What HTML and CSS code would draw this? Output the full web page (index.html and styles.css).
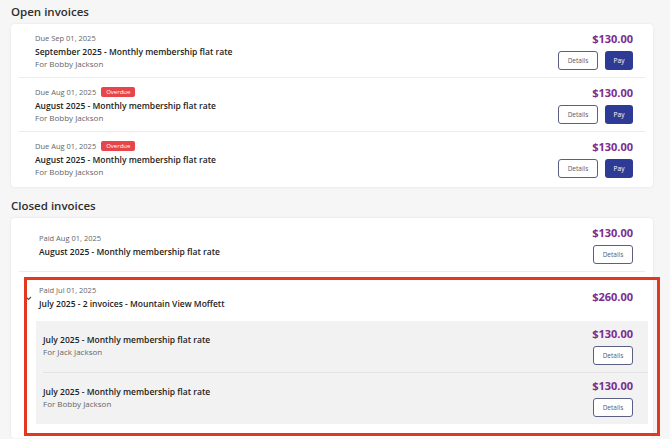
FILE: index.html
```html
<!DOCTYPE html>
<html lang="en">
<head>
  <meta charset="UTF-8" />
  <meta name="viewport" content="width=device-width, initial-scale=1.0"/>
  <title>Invoices</title>
  <link rel="stylesheet" href="styles.css">
</head>
<body>

<h2 class="section-title">Open invoices</h2>
<div class="card card-open">
  <div class="row">
    <div class="info">
      <div class="meta">Due Sep 01, 2025</div>
      <div class="name">September 2025 - Monthly membership flat rate</div>
      <div class="who">For Bobby Jackson</div>
    </div>
    <div class="side">
      <div class="amount">$130.00</div>
      <div class="actions">
        <button class="btn btn-outline">Details</button>
        <button class="btn btn-pay">Pay</button>
      </div>
    </div>
  </div>
  <div class="row">
    <div class="info">
      <div class="meta">Due Aug 01, 2025 <span class="badge">Overdue</span></div>
      <div class="name">August 2025 - Monthly membership flat rate</div>
      <div class="who">For Bobby Jackson</div>
    </div>
    <div class="side">
      <div class="amount">$130.00</div>
      <div class="actions">
        <button class="btn btn-outline">Details</button>
        <button class="btn btn-pay">Pay</button>
      </div>
    </div>
  </div>
  <div class="row">
    <div class="info">
      <div class="meta">Due Aug 01, 2025 <span class="badge">Overdue</span></div>
      <div class="name">August 2025 - Monthly membership flat rate</div>
      <div class="who">For Bobby Jackson</div>
    </div>
    <div class="side">
      <div class="amount">$130.00</div>
      <div class="actions">
        <button class="btn btn-outline">Details</button>
        <button class="btn btn-pay">Pay</button>
      </div>
    </div>
  </div>
</div>

<h2 class="section-title closed">Closed invoices</h2>
<div class="card">
  <div class="row row-closed">
    <div class="info">
      <div class="meta">Paid Aug 01, 2025</div>
      <div class="name">August 2025 - Monthly membership flat rate</div>
    </div>
    <div class="side">
      <div class="amount">$130.00</div>
      <div class="actions">
        <button class="btn btn-outline">Details</button>
      </div>
    </div>
  </div>

  <div class="group">
    <div class="group-head">
      <svg class="chevron" width="7" height="5" viewBox="0 0 7 5"><path d="M1 1l2.5 2.5L6 1" fill="none" stroke="#555" stroke-width="1.2"/></svg>
      <div class="info">
        <div class="meta">Paid Jul 01, 2025</div>
        <div class="name">July 2025 - 2 invoices - Mountain View Moffett</div>
      </div>
      <div class="amount">$260.00</div>
    </div>
    <div class="sub-list">
      <div class="sub-row">
        <div class="info">
          <div class="name">July 2025 - Monthly membership flat rate</div>
          <div class="who">For Jack Jackson</div>
        </div>
        <div class="side">
          <div class="amount">$130.00</div>
          <div class="actions">
            <button class="btn btn-outline">Details</button>
          </div>
        </div>
      </div>
      <div class="sub-row">
        <div class="info">
          <div class="name">July 2025 - Monthly membership flat rate</div>
          <div class="who">For Bobby Jackson</div>
        </div>
        <div class="side">
          <div class="amount">$130.00</div>
          <div class="actions">
            <button class="btn btn-outline">Details</button>
          </div>
        </div>
      </div>
    </div>
    <div class="highlight"></div>
  </div>
</div>

</body>
</html>
```

FILE: styles.css
```css
body {
  margin: 0;
  padding: 5px 17px 0 11px;
  background: #f6f6f7;
  font-family: "Open Sans", Arial, sans-serif;
  color: #2b2b2b;
  overflow: hidden;
}
.section-title {
  margin: 0 0 5px;
  font-size: 11.5px;
  line-height: 14px;
  font-weight: 600;
  color: #2e2e2e;
}
.section-title.closed {
  margin-top: 12px;
}
.card {
  background: #fff;
  border-radius: 4px;
  box-shadow: 0 0 3px rgba(0,0,0,0.08);
}
.card-open {
  padding-bottom: 2px;
}
.row {
  display: flex;
  align-items: center;
  justify-content: space-between;
  margin: 0 8px;
  padding: 7px 12px 7px 16px;
  border-bottom: 1px solid #ececee;
}
.card > .row:last-child {
  border-bottom: none;
}
.row-closed {
  padding-left: 20px;
}
.info {
  display: flex;
  flex-direction: column;
}
.meta {
  font-size: 7.5px;
  line-height: 14px;
  color: #666;
  display: flex;
  align-items: center;
  gap: 5px;
}
.name {
  font-size: 8.5px;
  line-height: 13px;
  font-weight: 600;
  color: #222;
}
.who {
  font-size: 8px;
  line-height: 12px;
  color: #666;
}
.badge {
  background: #e8444c;
  color: #fff;
  font-size: 6px;
  line-height: 10px;
  padding: 0 5px;
  border-radius: 2px;
}
.side {
  display: flex;
  flex-direction: column;
  align-items: flex-end;
  gap: 4px;
}
.amount {
  font-size: 11px;
  line-height: 16px;
  font-weight: 700;
  color: #7b2d8e;
}
.actions {
  display: flex;
  gap: 7px;
}
.btn {
  height: 19px;
  font-family: inherit;
  font-size: 6.5px;
  border-radius: 3px;
  cursor: pointer;
  padding: 0;
}
.btn-outline {
  width: 40px;
  background: #fff;
  border: 1px solid #5b5f84;
  color: #555a70;
}
.btn-pay {
  width: 28px;
  background: #2e3b96;
  border: none;
  color: #fff;
}
.group {
  position: relative;
  padding: 0 5px 14px 25px;
}
.group-head {
  position: relative;
  display: flex;
  align-items: center;
  justify-content: space-between;
  padding: 11px 15px 11px 3px;
}
.chevron {
  position: absolute;
  left: -11px;
  top: 24px;
}
.sub-list {
  background: #f2f2f3;
  padding: 0 0 0 7px;
}
.sub-row {
  display: flex;
  align-items: center;
  justify-content: space-between;
  padding: 5px 15px 7px 0;
  border-bottom: 1px solid #e3e3e5;
}
.sub-row:last-child {
  border-bottom: none;
}
.highlight {
  position: absolute;
  top: 5px;
  left: 13px;
  right: -7px;
  bottom: 2px;
  border: 3px solid #e1381f;
  pointer-events: none;
}
```
